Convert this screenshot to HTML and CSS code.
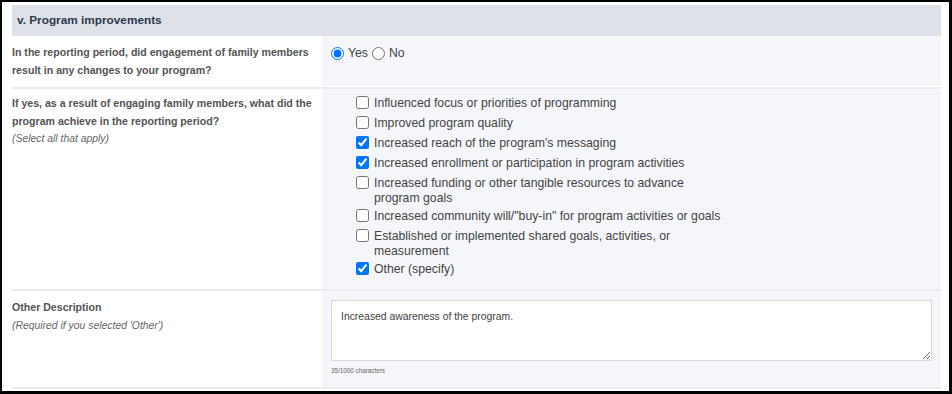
FILE: index.html
```html
<!DOCTYPE html>
<html>
<head>
<meta charset="utf-8">
<link rel="stylesheet" href="styles.css">
</head>
<body>
<div class="frame">
  <div class="section-header">v. Program improvements</div>

  <div class="row row-1">
    <div class="label">
      <div class="q">In the reporting period, did engagement of family members result in any changes to your program?</div>
    </div>
    <div class="value value-radio">
      <label class="radio"><input type="radio" name="yn" checked> Yes</label>
      <label class="radio"><input type="radio" name="yn"> No</label>
    </div>
  </div>

  <div class="row row-2">
    <div class="label">
      <div class="q">If yes, as a result of engaging family members, what did the program achieve in the reporting period?</div>
      <div class="hint">(Select all that apply)</div>
    </div>
    <div class="value value-checks">
      <ul class="checks">
        <li><input type="checkbox"><span>Influenced focus or priorities of programming</span></li>
        <li><input type="checkbox"><span>Improved program quality</span></li>
        <li><input type="checkbox" checked><span>Increased reach of the program's messaging</span></li>
        <li><input type="checkbox" checked><span>Increased enrollment or participation in program activities</span></li>
        <li><input type="checkbox"><span>Increased funding or other tangible resources to advance program goals</span></li>
        <li><input type="checkbox"><span>Increased community will/"buy-in" for program activities or goals</span></li>
        <li><input type="checkbox"><span>Established or implemented shared goals, activities, or measurement</span></li>
        <li><input type="checkbox" checked><span>Other (specify)</span></li>
      </ul>
    </div>
  </div>

  <div class="row row-3">
    <div class="label">
      <div class="q">Other Description</div>
      <div class="hint">(Required if you selected 'Other')</div>
    </div>
    <div class="value value-text">
      <textarea class="ta">Increased awareness of the program.</textarea>
      <div class="count">35/1000 characters</div>
    </div>
  </div>
</div>
</body>
</html>
```

FILE: styles.css
```css
html, body {
  margin: 0;
  padding: 0;
  background: #fff;
}
body {
  font-family: "Liberation Sans", Arial, sans-serif;
}
.frame {
  box-sizing: border-box;
  width: 952px;
  height: 394px;
  border: 2px solid #000;
  border-right-width: 3px;
  border-bottom-width: 3px;
  padding: 3px 8px 0 10px;
  overflow: hidden;
}
.section-header {
  background: #dee1e7;
  color: #2b3a4e;
  font-weight: bold;
  font-size: 11.8px;
  height: 31px;
  line-height: 31px;
  padding-left: 5px;
}
.row {
  display: grid;
  grid-template-columns: 310px 1fr;
  border-bottom: 2px solid #ebecef;
}
.label {
  padding: 8px 4px 8px 0;
  color: #555;
  font-size: 10.6px;
}
.row-2 .label {
  padding-top: 6px;
}
.q {
  font-weight: bold;
  line-height: 17.5px;
}
.hint {
  font-style: italic;
  font-size: 10.4px;
  line-height: 17px;
  color: #666;
}
.value {
  background: #f5f6fa;
  padding: 8px 9px;
  color: #444;
  font-size: 12.25px;
}
.value-radio {
  display: flex;
  align-items: flex-start;
  gap: 4px;
  height: 34px;
}
.radio {
  display: flex;
  align-items: center;
  gap: 4px;
  line-height: 17px;
  padding-top: 1px;
}
.radio input {
  margin: 0;
  width: 13px;
  height: 13px;
}
.value-checks {
  padding-top: 4px;
  padding-bottom: 10px;
}
.checks {
  list-style: none;
  margin: 0;
  padding: 0 0 0 25px;
}
.checks li {
  display: flex;
  align-items: flex-start;
  gap: 5px;
  padding: 1.5px 0;
  min-height: 17px;
  line-height: 15px;
}
.checks li input {
  margin: 1px 0 0;
  width: 13px;
  height: 13px;
  flex: none;
}
.checks li span {
  padding-top: 1px;
  margin-bottom: -1px;
  max-width: 352px;
}
.value-text {
  padding-top: 9px;
  padding-bottom: 12px;
}
.ta {
  box-sizing: border-box;
  display: block;
  width: 601px;
  height: 61px;
  border: 1px solid #d6d8dd;
  background: #fff;
  font-family: "Liberation Sans", Arial, sans-serif;
  font-size: 10.4px;
  color: #444;
  padding: 10px 9px;
  margin: 0;
  resize: vertical;
}
.count {
  font-size: 6.3px;
  color: #666;
  margin-top: 6px;
  line-height: 8px;
}
```
